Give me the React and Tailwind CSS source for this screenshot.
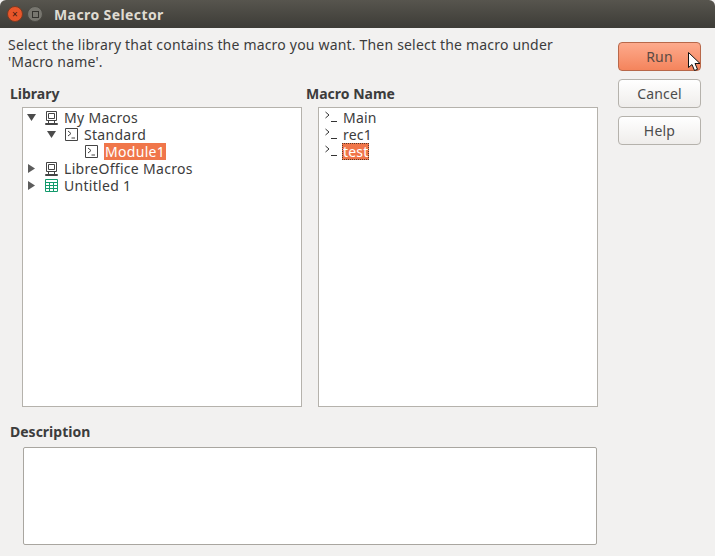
const font = { fontFamily: '"Noto Sans", "Open Sans", sans-serif' };

const Arrow = ({ open }) => (
  <svg width="9" height="9" viewBox="0 0 9 9" className="shrink-0">
    {open ? <path d="M0 1h9L4.5 8z" fill="#4c4c4c" /> : <path d="M1 0v9L8 4.5z" fill="#5c5c5c" />}
  </svg>
);

const Computer = () => (
  <svg width="13" height="14" viewBox="0 0 13 14" className="shrink-0" fill="none" stroke="#444">
    <path d="M1.5.5h10v9h-10zM3.5 2.5h6v5h-6zM.5 12.5h12v1H.5zM3.5 9.5v3M9.5 9.5v3" />
  </svg>
);

const Module = () => (
  <svg width="13" height="13" viewBox="0 0 13 13" className="shrink-0" fill="none" stroke="#444">
    <path d="M.5.5h12v12H.5zM3 3l3 2.5L3 8M6.5 10H10" />
  </svg>
);

const Sheet = () => (
  <svg width="13" height="13" viewBox="0 0 13 13" className="shrink-0" fill="none" stroke="#139a6c">
    <path d="M.5.5h12v12H.5zM.5 3.5h12M.5 6.5h12M.5 9.5h12M4.5 3.5v9M8.5 3.5v9" />
  </svg>
);

const Prompt = () => (
  <svg width="13" height="13" viewBox="0 0 13 13" className="shrink-0" fill="none" stroke="#333">
    <path d="M.5 1l3.5 3L.5 7M6 10.5h6" />
  </svg>
);

const TreeRow = ({ pad, arrow, icon, label, selected }) => (
  <div className="flex items-center h-[17px] tracking-[0.3px]" style={{ paddingLeft: pad }}>
    <div className="w-[18px] flex">{arrow}</div>
    {icon}
    <span className={selected ? 'ml-[6px] px-[1px] leading-[17px] bg-[#f0764a] text-white' : 'ml-[6px] leading-[17px]'}>{label}</span>
  </div>
);

const MacroRow = ({ label, selected }) => (
  <div className="flex items-center h-[17px] pl-[6px]">
    <Prompt />
    <span className={selected ? 'ml-[4px] px-[1px] leading-[17px] bg-[#f0764a] text-white outline-1 outline-dotted outline-[#5a3a2a] -outline-offset-1' : 'ml-[5px] leading-[17px]'}>{label}</span>
  </div>
);

const Btn = ({ children, active }) => (
  <button className={`w-[83px] h-[29px] rounded-[4px] border text-[14px] ${active ? 'border-[#b8684a] bg-gradient-to-b from-[#fdaa8c] to-[#f4845c] text-[#5a4a44]' : 'border-[#b5b2ac] bg-gradient-to-b from-white to-[#efedeb] text-[#4c4c4c]'}`}>
    {children}
  </button>
);

export default function App() {
  return (
    <div className="relative w-[715px] h-[556px] overflow-hidden bg-[#f2f1f0] text-[14px] tracking-[0.19px] text-[#3c3c3c] flex flex-col" style={font}>
      <div className="h-[28px] shrink-0 flex items-center rounded-t-[6px] bg-gradient-to-b from-[#57554e] to-[#3d3c37]">
        <div className="ml-[7px] w-[16px] h-[16px] rounded-full bg-[#e8562a] border border-[#7a3a22] flex items-center justify-center text-[10px] leading-none text-[#3a1a10]">×</div>
        <div className="ml-[4px] w-[16px] h-[16px] rounded-full bg-[#77766f] border border-[#4a4943] flex items-center justify-center">
          <div className="w-[7px] h-[7px] border border-[#33322e]" />
        </div>
        <span className="ml-[11px] text-[14px] font-bold tracking-[0.4px] text-[#dfdbd2]">Macro Selector</span>
      </div>

      <div className="flex-1 flex">
        <div className="w-[618px] shrink-0">
          <p className="pl-[8px] pt-[8px] w-[565px] leading-[17px]">
            Select the library that contains the macro you want. Then select the macro under 'Macro name'.
          </p>

          <div className="flex mt-[15px]">
            <div className="w-[296px] pl-[10px]">
              <div className="font-bold tracking-normal h-[17px] leading-[17px] mb-[5px]">Library</div>
              <div className="ml-[12px] w-[280px] h-[300px] bg-white border border-[#b5b2ac] pt-[1px]">
                <TreeRow pad={4} arrow={<Arrow open />} icon={<Computer />} label="My Macros" />
                <TreeRow pad={24} arrow={<Arrow open />} icon={<Module />} label="Standard" />
                <TreeRow pad={44} arrow={null} icon={<Module />} label="Module1" selected />
                <TreeRow pad={4} arrow={<Arrow />} icon={<Computer />} label="LibreOffice Macros" />
                <TreeRow pad={4} arrow={<Arrow />} icon={<Sheet />} label="Untitled 1" />
              </div>
            </div>
            <div className="pl-[10px]">
              <div className="font-bold tracking-normal h-[17px] leading-[17px] mb-[5px]">Macro Name</div>
              <div className="ml-[12px] w-[280px] h-[300px] bg-white border border-[#b5b2ac] pt-[1px]">
                <MacroRow label="Main" />
                <MacroRow label="rec1" />
                <MacroRow label="test" selected />
              </div>
            </div>
          </div>

          <div className="pl-[10px] mt-[16px]">
            <div className="font-bold tracking-normal h-[17px] leading-[17px] mb-[7px]">Description</div>
            <div className="ml-[13px] w-[574px] h-[98px] bg-white border border-[#a9a6a0] rounded-[2px]" />
          </div>
        </div>

        <div className="flex flex-col gap-[8px] pt-[14px]">
          <Btn active>Run</Btn>
          <Btn>Cancel</Btn>
          <Btn>Help</Btn>
        </div>
      </div>

      {/* mouse pointer over the Run button */}
      <svg width="13" height="20" viewBox="0 0 13 20" className="absolute left-[688px] top-[52px]">
        <path d="M.5.5v15l3.5-3 2.5 6 3-1.2-2.5-5.8h5z" fill="#fff" stroke="#111" />
      </svg>
    </div>
  );
}
